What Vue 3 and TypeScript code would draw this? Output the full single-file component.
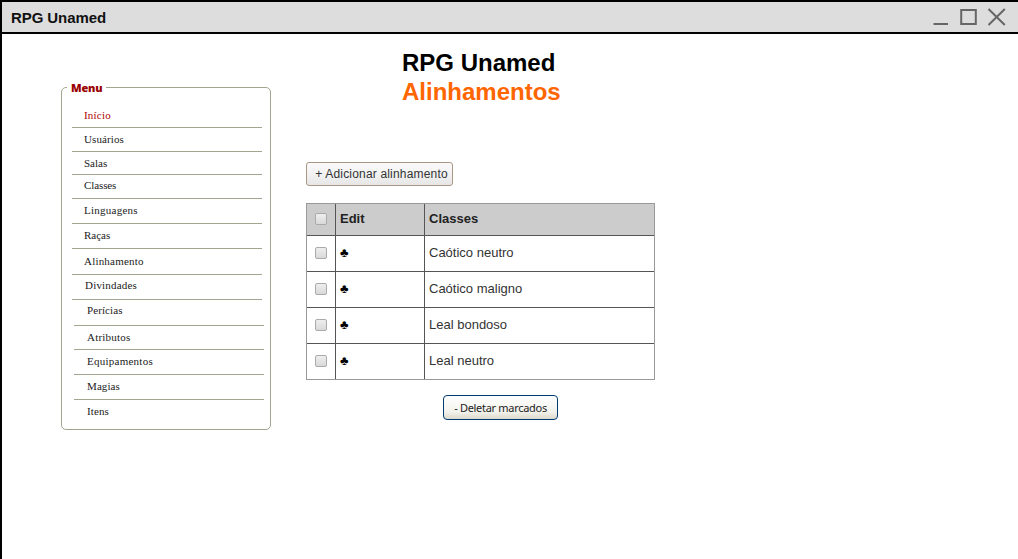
<script setup lang="ts">
import { ref } from 'vue'

interface MenuItem {
  label: string
  height: number
  top: number
  shift?: number
  indent: number
  spacing: number
}

const menu: MenuItem[] = [
  { label: 'Início', height: 24, top: 5, indent: 12, spacing: 0.2 },
  { label: 'Usuários', height: 24, top: 5, indent: 12, spacing: 0.1 },
  { label: 'Salas', height: 23, top: 5, indent: 12, spacing: 0 },
  { label: 'Classes', height: 24, top: 4, indent: 12, spacing: -0.1 },
  { label: 'Linguagens', height: 25, top: 5, indent: 12, spacing: 0.25 },
  { label: 'Raças', height: 25, top: 5, indent: 12, spacing: 0 },
  { label: 'Alinhamento', height: 26, top: 6, indent: 12, spacing: 0.2 },
  { label: 'Divindades', height: 25, top: 4, indent: 13, spacing: 0.2 },
  { label: 'Perícias', height: 26, top: 4, shift: 2, indent: 13, spacing: 0.1 },
  { label: 'Atributos', height: 24, top: 5, shift: 2, indent: 13, spacing: 0.2 },
  { label: 'Equipamentos', height: 25, top: 5, shift: 2, indent: 13, spacing: 0.25 },
  { label: 'Magias', height: 25, top: 5, shift: 2, indent: 13, spacing: 0.1 },
  { label: 'Itens', height: 24, top: 5, shift: 2, indent: 13, spacing: 0.1 },
]
const rows = ref(['Caótico neutro', 'Caótico maligno', 'Leal bondoso', 'Leal neutro'])
</script>

<template>
  <div class="window">
    <header class="titlebar">
      <span class="caption">RPG Unamed</span>
      <svg class="controls" width="74" height="20" viewBox="0 0 74 20" fill="none" stroke="#666" stroke-width="2">
        <path d="M1.5 17H16" />
        <rect x="29.2" y="3" width="14.6" height="14" />
        <path d="M56.5 2L72.8 18M72.8 2L56.5 18" />
      </svg>
    </header>
    <div class="body">
      <nav class="menu">
        <span class="legend">Menu</span>
        <ul>
          <li
            v-for="(item, i) in menu"
            :key="item.label"
            :class="{ active: i === 0 }"
            :style="{
              height: item.height + 'px',
              paddingTop: item.top + 'px',
              marginLeft: (item.shift ?? 0) + 'px',
              paddingLeft: item.indent + 'px',
              letterSpacing: item.spacing + 'px',
            }"
          >{{ item.label }}</li>
        </ul>
      </nav>
      <main>
        <h1>RPG Unamed</h1>
        <h2>Alinhamentos</h2>
        <button class="add">+ Adicionar alinhamento</button>
        <table>
          <thead>
            <tr>
              <th class="pick"><input type="checkbox" /></th>
              <th class="edit">Edit</th>
              <th>Classes</th>
            </tr>
          </thead>
          <tbody>
            <tr v-for="row in rows" :key="row">
              <td class="pick"><input type="checkbox" /></td>
              <td class="edit">♣</td>
              <td>{{ row }}</td>
            </tr>
          </tbody>
        </table>
        <button class="delete">- Deletar marcados</button>
      </main>
    </div>
  </div>
</template>

<style>
html, body { margin: 0; overflow: hidden; background: #fff; }
</style>

<style scoped>
.window {
  box-sizing: border-box;
  width: 1018px;
  height: 559px;
  border: solid #000;
  border-width: 2px 0 0 2px;
  background: #fff;
  font-family: "Liberation Sans", Arial, sans-serif;
}
.titlebar {
  display: flex;
  justify-content: space-between;
  height: 30px;
  padding: 0 12px 0 9px;
  background: #ddd;
  border-bottom: 2px solid #000;
}
.caption { font-size: 15px; font-weight: 700; line-height: 31px; letter-spacing: -0.08px; color: #111; }
.controls { margin-top: 5px; }
.body { display: flex; align-items: flex-start; }
.menu {
  box-sizing: border-box;
  position: relative;
  width: 210px;
  height: 343px;
  margin: 53px 0 0 59px;
  padding: 16px 8px 0 10px;
  border: 1px solid #a5a490;
  border-radius: 5px;
}
.legend {
  position: absolute;
  top: -9px;
  left: 5px;
  padding: 0 4px;
  background: #fff;
  color: #990000;
  font: 800 11px/18px "Open Sans", sans-serif;
  letter-spacing: -0.2px;
}
ul { list-style: none; margin: 0; padding: 0; }
li {
  box-sizing: border-box;
  width: 190px;
  border-bottom: 1px solid #a5a490;
  color: #222;
  font: 11px/12px "Liberation Serif", serif;
}
li:last-child { border-bottom: 0; }
li.active { color: #b00000; }
main { display: flex; flex-direction: column; align-items: flex-start; margin-left: 35px; padding-top: 14px; }
h1, h2 { margin: 0 0 0 96px; font-size: 24px; line-height: 29px; font-weight: 700; }
h1 { color: #000; }
h2 { color: #ff6600; }
button { box-sizing: border-box; padding: 0; white-space: nowrap; }
.add {
  width: 147px;
  height: 24px;
  margin-top: 56px;
  padding-left: 4px;
  border: 1px solid #a89885;
  border-radius: 3px;
  background: linear-gradient(#fafafa, #f2f2f2 50%, #e6e6e6);
  color: #333;
  font: 12px/22px "Liberation Sans", Arial, sans-serif;
  letter-spacing: 0.18px;
}
table {
  width: 349px;
  margin-top: 17px;
  border-collapse: separate;
  border-spacing: 0;
  table-layout: fixed;
  border: 1px solid #999;
  font-size: 13px;
  color: #333;
}
th, td {
  box-sizing: border-box;
  height: 36px;
  padding: 0 4px 2px;
  border: solid #555;
  border-width: 0 1px 1px 0;
  text-align: left;
  line-height: 15px;
}
th { height: 32px; background: #ccc; color: #222; padding-bottom: 3px; }
th:last-child, td:last-child { border-right: 0; }
tbody tr:last-child td { border-bottom: 0; height: 35px; }
.pick { width: 29px; padding-left: 8px; padding-right: 0; }
.edit { width: 89px; }
td.edit { color: #000; }
input {
  appearance: none;
  display: block;
  box-sizing: border-box;
  width: 12px;
  height: 12px;
  margin: 1px 0 0;
  border: 1px solid #aaa;
  border-radius: 2px;
  background: linear-gradient(#eee, #d9d9d9);
}
.delete {
  width: 115px;
  height: 25px;
  margin: 15px 0 0 137px;
  border: 1px solid #003c74;
  border-radius: 4px;
  background: linear-gradient(#fff, #f2f2ec 70%, #dcd8ca);
  color: #222;
  font: 11px/23px "Noto Sans", sans-serif;
  letter-spacing: -0.3px;
}
</style>
